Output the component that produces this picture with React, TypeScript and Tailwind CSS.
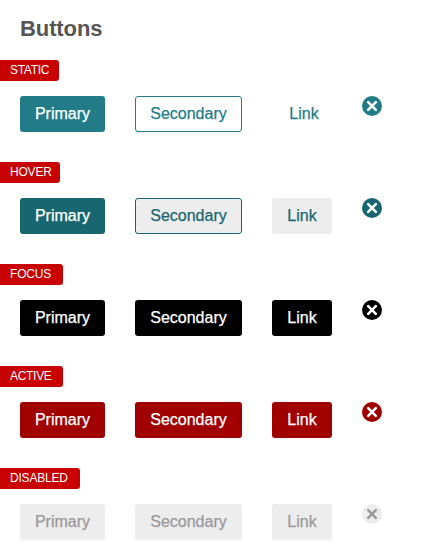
type ButtonState = {
  label: string;
  tag: string;
  primary: string;
  secondary: string;
  link: string;
  close: string;
  cross: string;
};

const states: ButtonState[] = [
  {
    label: "STATIC",
    tag: "w-[59px] tracking-[-0.3px]",
    primary: "bg-[#217c87] text-white",
    secondary: "border border-[#217c87] bg-white text-[#217c87]",
    link: "pl-[4px] text-[#217c87]",
    close: "text-[#217c87]",
    cross: "stroke-white",
  },
  {
    label: "HOVER",
    tag: "w-[60px] tracking-[-0.2px]",
    primary: "bg-[#18666f] text-white",
    secondary: "border border-[#18666f] bg-[#ededed] text-[#18666f]",
    link: "bg-[#ededed] text-[#18666f]",
    close: "text-[#18666f]",
    cross: "stroke-white",
  },
  {
    label: "FOCUS",
    tag: "w-[63px] tracking-[-0.2px]",
    primary: "bg-black text-white",
    secondary: "bg-black text-white",
    link: "bg-black text-white",
    close: "text-black",
    cross: "stroke-white",
  },
  {
    label: "ACTIVE",
    tag: "w-[63px] tracking-[-0.3px]",
    primary: "bg-[#a00000] text-white",
    secondary: "bg-[#a00000] text-white",
    link: "bg-[#a00000] text-white",
    close: "text-[#a00000]",
    cross: "stroke-white",
  },
  {
    label: "DISABLED",
    tag: "w-[80px] tracking-[-0.2px]",
    primary: "bg-[#ededed] text-[#999999]",
    secondary: "bg-[#ededed] text-[#999999]",
    link: "bg-[#ededed] text-[#999999]",
    close: "text-[#ededed]",
    cross: "stroke-[#999999]",
  },
];

const base =
  "flex h-9 items-center justify-center rounded-[3px] pb-px text-base leading-none [-webkit-text-stroke:0.25px_currentColor]";

function StateRow({ state }: { state: ButtonState }) {
  return (
    <section className="h-[102px]">
      <h2
        className={`flex h-[21px] items-center rounded-r-[3px] bg-[#c80000] pb-px pl-[10px] text-xs leading-none whitespace-nowrap text-white ${state.tag}`}
      >
        {state.label}
      </h2>
      <div className="mt-[15px] flex items-start gap-[30px] pl-5">
        <button className={`${base} w-[85px] ${state.primary}`}>Primary</button>
        <button className={`${base} w-[107px] ${state.secondary}`}>Secondary</button>
        <button className={`${base} w-[60px] ${state.link}`}>Link</button>
        <button aria-label="Close" className={state.close}>
          <svg className="block size-5" viewBox="0 0 20 20" fill="none">
            <circle cx="10" cy="10" r="10" fill="currentColor" />
            <path
              d="M6.2 6.2 13.8 13.8M13.8 6.2 6.2 13.8"
              className={state.cross}
              strokeWidth="2.6"
              strokeLinecap="round"
            />
          </svg>
        </button>
      </div>
    </section>
  );
}

export default function App() {
  return (
    <main className="h-[560px] w-[440px] overflow-hidden bg-white font-['Liberation_Sans',Arial,sans-serif]">
      <h1 className="h-[60px] pt-[17px] pl-5 text-[22px] leading-[24px] font-bold tracking-[-0.1px] text-[#555555]">
        Buttons
      </h1>
      {states.map((state) => (
        <StateRow key={state.label} state={state} />
      ))}
    </main>
  );
}
